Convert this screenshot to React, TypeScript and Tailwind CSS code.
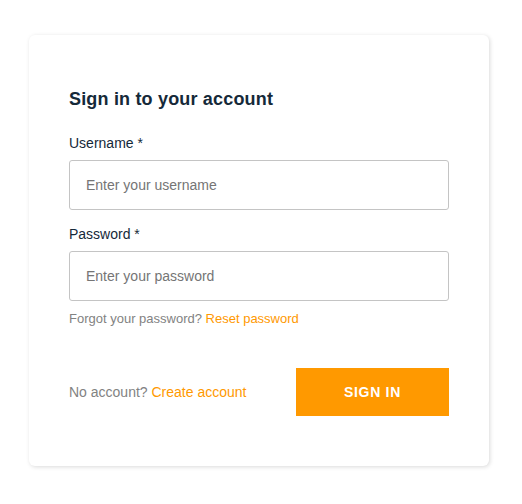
export default function App() {
  return (
    <div className="min-h-screen bg-white pt-[35px] font-['Liberation_Sans',Arial,sans-serif]">
      <div className="ml-[29px] w-[460px] rounded-[6px] bg-white px-[40px] pb-[50px] pt-[54px] shadow-[1px_1px_4px_0_rgba(0,0,0,0.15)]">
        <h1 className="text-[18px] font-bold leading-[21px] tracking-[0.18px] text-[#152939]">
          Sign in to your account
        </h1>

        <div className="mt-[25px]">
          <label className="block text-[14px] leading-[16px] text-[#152939]">
            Username *
          </label>
          <input
            type="text"
            placeholder="Enter your username"
            className="mt-[9px] block h-[50px] w-full rounded-[3px] border border-[#c4c4c4] bg-white px-[16px] text-[14px] text-[#152939] placeholder-[#757575] outline-none"
          />
        </div>

        <div className="mt-[16px]">
          <label className="block text-[14px] leading-[16px] text-[#152939]">
            Password *
          </label>
          <input
            type="password"
            placeholder="Enter your password"
            className="mt-[9px] block h-[50px] w-full rounded-[3px] border border-[#c4c4c4] bg-white px-[16px] text-[14px] text-[#152939] placeholder-[#757575] outline-none"
          />
          <p className="mt-[10px] text-[13px] leading-[15px] text-[#828282]">
            Forgot your password?{" "}
            <a href="#" className="text-[#ff9900]">
              Reset password
            </a>
          </p>
        </div>

        <div className="mt-[42px] flex items-center justify-between">
          <span className="text-[14px] text-[#828282]">
            No account?{" "}
            <a href="#" className="text-[#ff9900]">
              Create account
            </a>
          </span>
          <button className="h-[48px] w-[153px] bg-[#ff9900] text-[14px] font-bold tracking-[0.7px] text-white">
            SIGN IN
          </button>
        </div>
      </div>
    </div>
  );
}
